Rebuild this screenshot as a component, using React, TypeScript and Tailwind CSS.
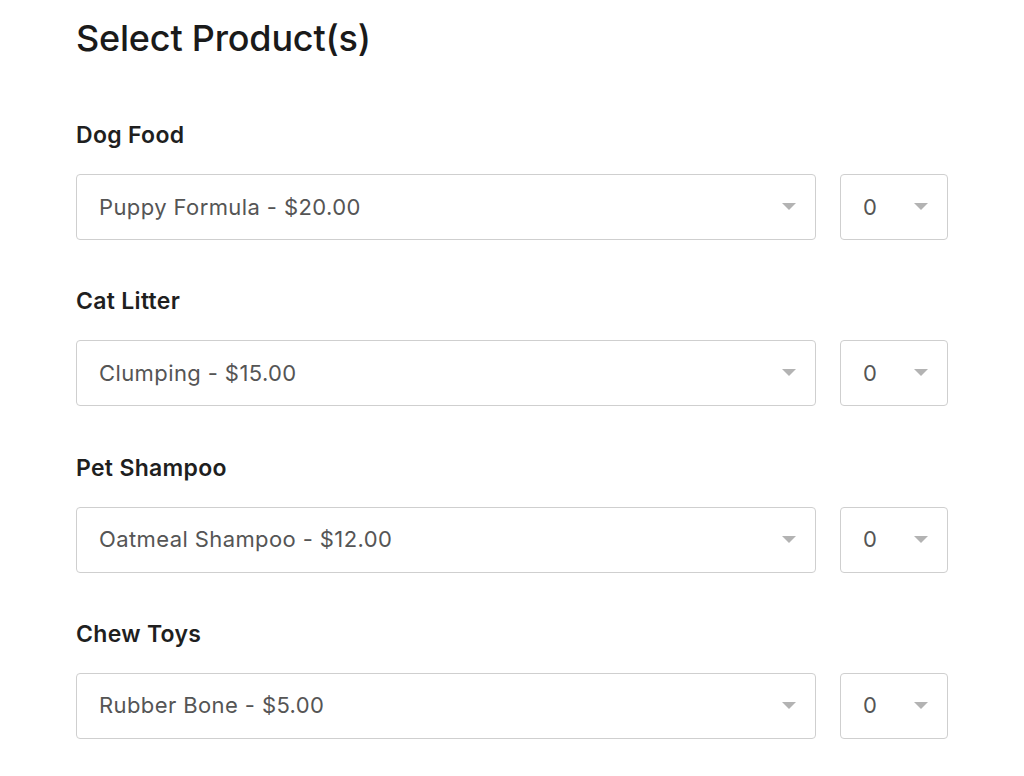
import { ChangeEvent, useState } from "react";

type Group = { label: string; option: string };

const groups: Group[] = [
  { label: "Dog Food", option: "Puppy Formula - $20.00" },
  { label: "Cat Litter", option: "Clumping - $15.00" },
  { label: "Pet Shampoo", option: "Oatmeal Shampoo - $12.00" },
  { label: "Chew Toys", option: "Rubber Bone - $5.00" },
];

function Caret() {
  return (
    <svg width="14" height="8" viewBox="0 0 14 8" className="shrink-0">
      <path d="M0 0 L14 0 L7 7 Z" fill="#b3b3b3" />
    </svg>
  );
}

function ProductRow({ group }: { group: Group }) {
  const [qty, setQty] = useState("0");
  return (
    <div>
      <h3 className="text-[23px] font-semibold text-[#1f1f1f] leading-none tracking-[0.3px]">{group.label}</h3>
      <div className="flex gap-6 mt-[27px]">
        <div className="relative w-[740px] h-[66px] rounded border border-[#cfcfcf] flex items-center pl-[22px] pr-[19px]">
          <span className="flex-1 text-[22px] text-[#555] tracking-[0.4px]">{group.option}</span>
          <Caret />
        </div>
        <label className="relative w-[108px] h-[66px] rounded border border-[#cfcfcf] flex items-center pl-[22px] pr-[19px]">
          <span className="flex-1 text-[22px] text-[#555]">{qty}</span>
          <Caret />
          <select
            value={qty}
            onChange={(e: ChangeEvent<HTMLSelectElement>) => setQty(e.target.value)}
            className="absolute inset-0 opacity-0"
          >
            {[0, 1, 2, 3, 4, 5].map((n) => (
              <option key={n} value={n}>{n}</option>
            ))}
          </select>
        </label>
      </div>
    </div>
  );
}

export default function App() {
  return (
    <div
      className="bg-white min-h-[776px] pl-[76px] pt-[20px]"
      style={{ fontFamily: "Inter, 'Noto Sans', sans-serif" }}
    >
      <h1 className="text-[36px] font-medium text-[#1a1a1a] leading-none tracking-[-0.2px]">Select Product(s)</h1>
      <div className="mt-[68px] flex flex-col gap-[50.3px]">
        {groups.map((g) => (
          <ProductRow key={g.label} group={g} />
        ))}
      </div>
    </div>
  );
}
